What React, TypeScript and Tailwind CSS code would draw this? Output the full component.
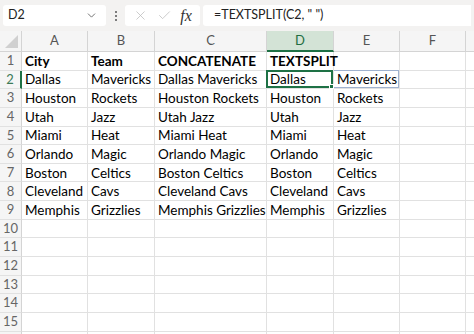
import { ChevronDown, X, Check } from 'lucide-react';

const cols = ['A', 'B', 'C', 'D', 'E', 'F', 'G'];

const rows: string[][] = [
  ['City', 'Team', 'CONCATENATE', 'TEXTSPLIT', ''],
  ['Dallas', 'Mavericks', 'Dallas Mavericks', 'Dallas', 'Mavericks'],
  ['Houston', 'Rockets', 'Houston Rockets', 'Houston', 'Rockets'],
  ['Utah', 'Jazz', 'Utah Jazz', 'Utah', 'Jazz'],
  ['Miami', 'Heat', 'Miami Heat', 'Miami', 'Heat'],
  ['Orlando', 'Magic', 'Orlando Magic', 'Orlando', 'Magic'],
  ['Boston', 'Celtics', 'Boston Celtics', 'Boston', 'Celtics'],
  ['Cleveland', 'Cavs', 'Cleveland Cavs', 'Cleveland', 'Cavs'],
  ['Memphis', 'Grizzlies', 'Memphis Grizzlies', 'Memphis', 'Grizzlies'],
];

const totalRows = 16;

export default function App() {
  return (
    <div className="w-[474px] h-[334px] overflow-hidden bg-white font-['Lato',sans-serif] select-none">
      {/* formula bar */}
      <div className="h-[31px] bg-[#f3f2f1] flex items-center gap-[3px] px-[3px]">
        <div className="w-[103px] h-[21px] bg-white rounded-[3px] flex items-center justify-between pl-[5px] pr-[8px] text-[12.5px] text-[#222]">
          <span>D2</span>
          <ChevronDown className="w-[13px] h-[13px] text-[#555]" strokeWidth={1.5} />
        </div>
        <div className="w-[13px] flex flex-col items-center gap-[2px]">
          <span className="w-[2px] h-[2px] bg-[#555] rounded-full" />
          <span className="w-[2px] h-[2px] bg-[#555] rounded-full" />
          <span className="w-[2px] h-[2px] bg-[#555] rounded-full" />
        </div>
        <div className="w-[75px] h-[21px] bg-white rounded-[3px] flex items-center justify-around px-[4px] text-[#bbb]">
          <X className="w-[15px] h-[15px]" strokeWidth={1.2} />
          <Check className="w-[15px] h-[15px]" strokeWidth={1.2} />
          <span className="font-['Liberation_Serif',serif] italic text-[16px] text-[#333] leading-none">fx</span>
        </div>
        <div className="flex-1 h-[21px] bg-white rounded-l-[3px] flex items-center pl-[11px] text-[12.5px] text-[#222]">
          =TEXTSPLIT(C2, " ")
        </div>
      </div>

      {/* grid */}
      <div className="grid w-[540px] grid-cols-[22px_66px_67px_112px_67px_66px_66px_66px] grid-rows-[21px_repeat(16,18.65px)]">
        <div className="bg-[#f5f5f5] border-r border-b border-[#d4d4d4] relative">
          <div className="absolute right-[3px] bottom-[3px] w-0 h-0 border-l-[13px] border-l-transparent border-b-[13px] border-b-[#d0d0d0]" />
        </div>
        {cols.map((c) => (
          <div
            key={c}
            className={`flex items-center justify-center text-[13px] border-r ${
              c === 'D'
                ? 'bg-[#d3e3d6] text-[#1e6e42] border-b-2 border-b-[#1e7145] border-r-[#d4d4d4]'
                : 'bg-[#f5f5f5] text-[#555] border-b border-[#d4d4d4]'
            }`}
          >
            {c === 'G' ? '' : c}
          </div>
        ))}

        {Array.from({ length: totalRows }).map((_, r) => {
          const data = rows[r] || [];
          const rowNum = r + 1;
          return [
            <div
              key={`h${r}`}
              className={`flex items-center justify-center text-[13px] bg-[#f5f5f5] border-b border-[#e1e1e1] ${
                rowNum === 2 ? 'text-[#3d7a57] bg-[#e3ece5] border-r-2 border-r-[#1e7145]' : 'text-[#666] border-r border-r-[#d4d4d4]'
              }`}
            >
              {rowNum < 16 ? rowNum : ''}
            </div>,
            ...cols.map((c, ci) => {
              const text = data[ci] || '';
              const isD2 = rowNum === 2 && c === 'D';
              const isE2 = rowNum === 2 && c === 'E';
              return (
                <div
                  key={`${r}-${c}`}
                  className={`relative flex items-center pl-[3px] whitespace-nowrap text-[13.5px] text-black border-r border-b border-[#e1e1e1] ${
                    rowNum === 1 ? 'font-bold' : ''
                  }`}
                >
                  {isD2 && (
                    <div className="absolute -left-[1px] -top-[1px] right-0 bottom-0 border-2 border-[#1e7145]">
                      <div className="absolute -right-[3px] -bottom-[3px] w-[5px] h-[5px] bg-[#1e7145] border border-white" />
                    </div>
                  )}
                  {isE2 && (
                    <div className="absolute left-0 -top-[1px] right-0 bottom-0 border border-[#9fb2cf] border-l-0" />
                  )}
                  <span className="relative">{text}</span>
                </div>
              );
            }),
          ];
        })}
      </div>
    </div>
  );
}
